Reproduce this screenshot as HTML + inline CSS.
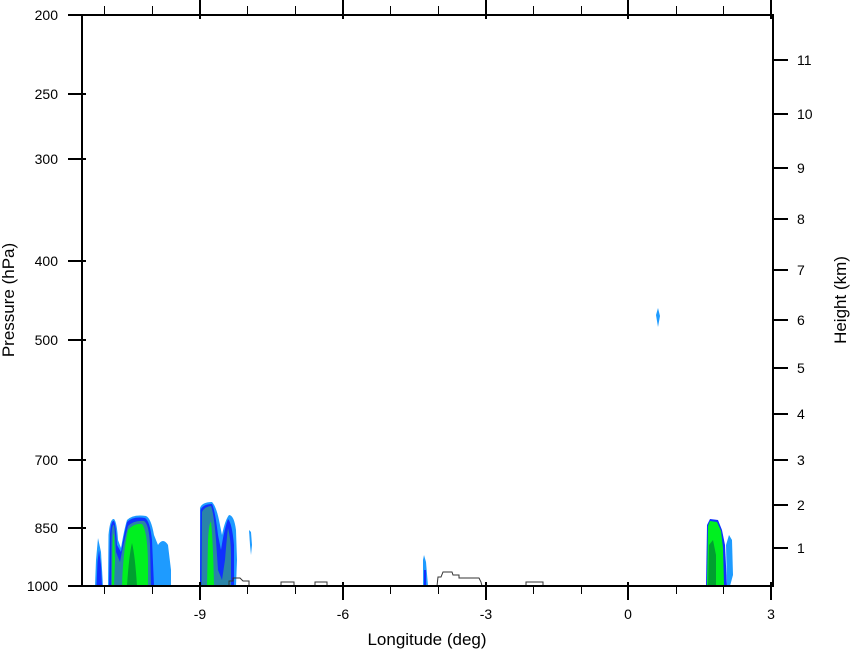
<!DOCTYPE html>
<html><head><style>
html,body{margin:0;padding:0;background:#fff;}
svg{display:block;font-family:"Liberation Sans",Arial,sans-serif;}
</style></head><body>
<svg width="850" height="650" viewBox="0 0 850 650" xmlns="http://www.w3.org/2000/svg">
<rect width="850" height="650" fill="#fff"/>
<g>
<path d="M95,586 L96,560 L98,538 L101,552 L103,586Z" fill="#1e9bff"/>
<path d="M96.5,586 L97.5,562 L99,550 L101,565 L102,586Z" fill="#1030ff"/>
<!-- group 2 -->
<path d="M108,586 L108.5,535 Q110,518 114,519 Q117,522 118,540 L121,548 Q124,530 127,520 Q133,514 146,516 Q151,518 154,535 L158,545 Q163,537 168,545 L171,570 L171,586Z" fill="#1e9bff"/>
<path d="M109,586 L110,534 Q111,520 114,521 Q116,525 117,545 L121,552 Q124,534 127,522 Q133,516 145,518 Q150,521 152,540 L154,586Z" fill="#1030ff"/>
<path d="M111,586 L111.5,537 Q112,524 114,525 Q115,530 116,552 L120,562 Q123,545 128,526 Q134,520 144,521 Q149,524 150,545 L151,586Z" fill="#2a84a8"/>
<path d="M112,586 L112.5,548 Q113,532 114,534 L115,560 L114,586Z" fill="#00f020"/>
<path d="M122,586 Q123,552 128,530 Q134,523 142,524 Q147,530 148,560 L148,586Z" fill="#00f020"/>
<path d="M127,586 Q129,555 132,543 Q135,555 137,586Z" fill="#00a030"/>
<!-- group 3 -->
<path d="M200,586 L200,508 Q202,502 212,502 Q216,506 219,520 L222,535 Q225,520 229,515 Q234,515 236,530 L237,560 L236,586Z" fill="#1e9bff"/>
<path d="M200,586 L200.5,510 Q203,504 212,504 Q215,510 218,535 L221,550 Q224,530 228,519 Q232,523 234,545 L234,586Z" fill="#1030ff"/>
<path d="M201.5,586 L202,512 Q204,507 211,506 Q214,514 216,540 L218,570 L222,580 L225,560 Q227,535 228,528 Q231,540 231,555 L231,586Z" fill="#2a84a8"/>
<path d="M207,586 L208,540 Q209,522 211,522 Q213,540 214,586Z" fill="#00f020"/>
<path d="M249,530 L251,532 L252,545 L251,555 L250,545Z" fill="#1e9bff"/>
<path d="M423,586 L423,560 L424,555 L426,562 L428,586Z" fill="#1e9bff"/>
<path d="M424,586 L424,570 L426,570 L426,586Z" fill="#1030ff"/>
<!-- right group -->
<path d="M706,586 L707,525 L710,519 L718,520 L722,530 L725,545 L727,586Z" fill="#1030ff"/>
<path d="M707,586 L708,526 L710,521 L717,522 L721,531 L723,548 L724,586Z" fill="#00f020"/>
<path d="M708,586 L709,545 L713,540 L716,555 L716,586Z" fill="#00a030"/>
<path d="M726,545 L729,535 L732,540 L733,575 L730,586 L727,586Z" fill="#1e9bff"/>
<path d="M656,315 L658,308 L660,316 L658,327Z" fill="#1e9bff"/>
</g>
<g fill="none" stroke="#333" stroke-width="1">
<path d="M229,586 L229,581 L233,581 L233,578 L240,578 L243,581 L249,581 L249,586"/>
<path d="M281,586 L281,582 L294,582 L294,586"/>
<path d="M315,586 L315,582 L327,582 L327,586"/>
<path d="M437,586 L438,577 L441,577 L443,572 L452,572 L453,575 L459,575 L459,578 L479,578 L481,582 L482,586"/>
<path d="M526,586 L526,582 L543,582 L543,586"/>
</g>
<g stroke="#000" fill="none">
<rect x="82" y="15" width="691" height="571" stroke-width="2"/>
</g>
<g stroke="#000" stroke-width="2">
<line x1="68" y1="15" x2="82" y2="15"/>
<line x1="68" y1="94" x2="86" y2="94"/>
<line x1="68" y1="159" x2="86" y2="159"/>
<line x1="68" y1="261" x2="86" y2="261"/>
<line x1="68" y1="340" x2="86" y2="340"/>
<line x1="68" y1="460" x2="86" y2="460"/>
<line x1="68" y1="528" x2="86" y2="528"/>
<line x1="68" y1="586" x2="82" y2="586"/>
<line x1="773" y1="60" x2="788" y2="60"/>
<line x1="773" y1="114" x2="788" y2="114"/>
<line x1="773" y1="168" x2="788" y2="168"/>
<line x1="773" y1="219" x2="788" y2="219"/>
<line x1="773" y1="270" x2="788" y2="270"/>
<line x1="773" y1="320" x2="788" y2="320"/>
<line x1="773" y1="368" x2="788" y2="368"/>
<line x1="773" y1="414" x2="788" y2="414"/>
<line x1="773" y1="460" x2="788" y2="460"/>
<line x1="773" y1="505" x2="788" y2="505"/>
<line x1="773" y1="548" x2="788" y2="548"/>
<line x1="200" y1="0" x2="200" y2="19"/><line x1="343" y1="0" x2="343" y2="19"/><line x1="486" y1="0" x2="486" y2="19"/><line x1="628" y1="0" x2="628" y2="19"/><line x1="771" y1="0" x2="771" y2="19"/>
<line x1="200" y1="582" x2="200" y2="600"/><line x1="343" y1="582" x2="343" y2="600"/><line x1="486" y1="582" x2="486" y2="600"/><line x1="628" y1="582" x2="628" y2="600"/><line x1="771" y1="582" x2="771" y2="600"/>
</g>
<g stroke="#000" stroke-width="1">
<line x1="104.5" y1="6" x2="104.5" y2="15"/><line x1="152.5" y1="6" x2="152.5" y2="15"/><line x1="247.5" y1="6" x2="247.5" y2="15"/><line x1="295.5" y1="6" x2="295.5" y2="15"/><line x1="390.5" y1="6" x2="390.5" y2="15"/><line x1="438.5" y1="6" x2="438.5" y2="15"/><line x1="533.5" y1="6" x2="533.5" y2="15"/><line x1="581.5" y1="6" x2="581.5" y2="15"/><line x1="676.5" y1="6" x2="676.5" y2="15"/><line x1="723.5" y1="6" x2="723.5" y2="15"/>
<line x1="104.5" y1="586" x2="104.5" y2="594"/><line x1="152.5" y1="586" x2="152.5" y2="594"/><line x1="247.5" y1="586" x2="247.5" y2="594"/><line x1="295.5" y1="586" x2="295.5" y2="594"/><line x1="390.5" y1="586" x2="390.5" y2="594"/><line x1="438.5" y1="586" x2="438.5" y2="594"/><line x1="533.5" y1="586" x2="533.5" y2="594"/><line x1="581.5" y1="586" x2="581.5" y2="594"/><line x1="676.5" y1="586" x2="676.5" y2="594"/><line x1="723.5" y1="586" x2="723.5" y2="594"/>
</g>
<g font-size="14" fill="#000" text-anchor="end">
<text x="58" y="20">200</text><text x="58" y="99">250</text><text x="58" y="164">300</text><text x="58" y="266">400</text><text x="58" y="345">500</text><text x="58" y="465">700</text><text x="58" y="533">850</text><text x="58" y="591">1000</text>
</g>
<g font-size="14" fill="#000">
<text x="797" y="65">11</text><text x="797" y="119">10</text><text x="797" y="173">9</text><text x="797" y="224">8</text><text x="797" y="275">7</text><text x="797" y="325">6</text><text x="797" y="373">5</text><text x="797" y="419">4</text><text x="797" y="465">3</text><text x="797" y="510">2</text><text x="797" y="553">1</text>
</g>
<g font-size="14" fill="#000" text-anchor="middle">
<text x="200" y="619">-9</text><text x="343" y="619">-6</text><text x="486" y="619">-3</text><text x="628" y="619">0</text><text x="771" y="619">3</text>
<text x="427" y="645" font-size="17">Longitude (deg)</text>
<text transform="translate(14,300) rotate(-90)" font-size="17">Pressure (hPa)</text>
<text transform="translate(846,300) rotate(-90)" font-size="17">Height (km)</text>
</g>
</svg>
</body></html>
